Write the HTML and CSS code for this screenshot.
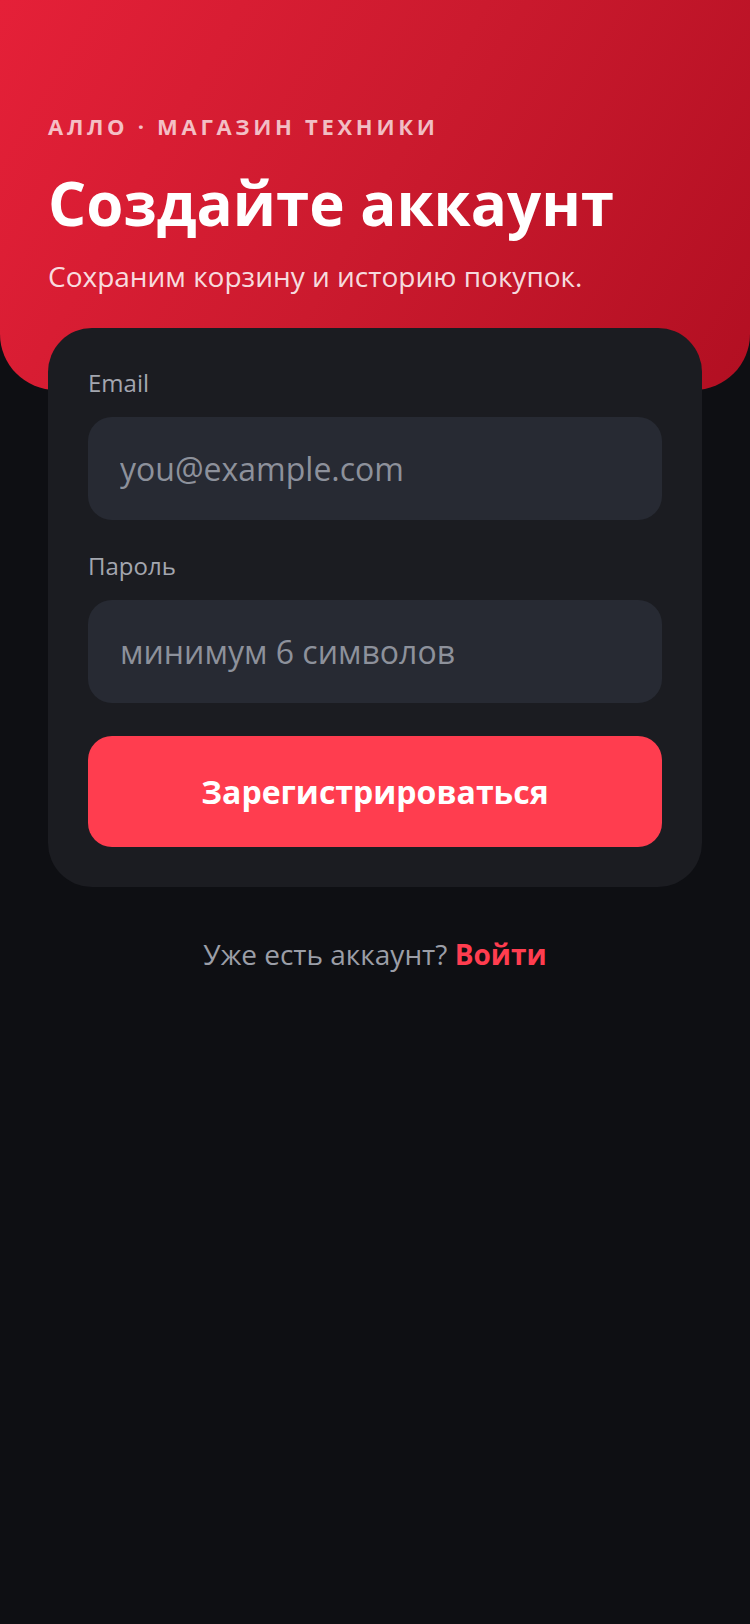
FILE: index.html
```html
<!DOCTYPE html>
<html lang="ru">
<head>
<meta charset="utf-8">
<meta name="viewport" content="width=750">
<title>Создайте аккаунт</title>
<link rel="stylesheet" href="styles.css">
</head>
<body>
<header class="hero">
  <p class="eyebrow">АЛЛО · МАГАЗИН ТЕХНИКИ</p>
  <h1 class="title">Создайте аккаунт</h1>
  <p class="subtitle">Сохраним корзину и историю покупок.</p>
</header>
<main>
  <form class="card">
    <div class="field">
      <label class="label" for="email">Email</label>
      <input class="input" id="email" type="email" placeholder="you@example.com">
    </div>
    <div class="field">
      <label class="label" for="pass">Пароль</label>
      <input class="input" id="pass" type="password" placeholder="минимум 6 символов">
    </div>
    <button class="submit" type="button">Зарегистрироваться</button>
  </form>
  <p class="footer">Уже есть аккаунт? <a class="login" href="#">Войти</a></p>
</main>
</body>
</html>
```
FILE: styles.css
```css
* { box-sizing: border-box; }
html, body {
  margin: 0;
  padding: 0;
  background: #0e0f13;
  font-family: "Open Sans", "Noto Sans", sans-serif;
}
.hero {
  height: 390px;
  padding: 111px 48px 0;
  background: linear-gradient(120deg, #e52038 0%, #cb1a2e 50%, #b20f22 100%);
  border-radius: 0 0 56px 56px;
}
.eyebrow {
  margin: 0;
  font-size: 22px;
  line-height: 30px;
  font-weight: 700;
  letter-spacing: 3.7px;
  color: rgba(255, 255, 255, 0.72);
}
.title {
  margin: 25px 0 0;
  font-size: 60px;
  line-height: 74px;
  font-weight: 700;
  color: #ffffff;
  letter-spacing: 0;
}
.subtitle {
  margin: 18px 0 0;
  font-size: 28px;
  line-height: 36px;
  font-weight: 400;
  color: rgba(255, 255, 255, 0.86);
}
.card {
  margin: -62px 48px 0;
  padding: 40px;
  background: #1b1c21;
  border-radius: 44px;
  display: flex;
  flex-direction: column;
  gap: 31px;
}
.field {
  display: flex;
  flex-direction: column;
  gap: 19px;
}
.label {
  font-size: 24px;
  line-height: 30px;
  color: #a3a6af;
}
.input {
  height: 103px;
  width: 100%;
  border: none;
  outline: none;
  border-radius: 24px;
  background: #272a33;
  padding: 0 32px;
  font-family: inherit;
  font-size: 32px;
  color: #e6e7ea;
}
.input::placeholder {
  color: #8d919b;
  opacity: 1;
}
.submit {
  margin-top: 2px;
  height: 111px;
  border: none;
  border-radius: 24px;
  background: #ff3d4f;
  color: #ffffff;
  font-family: inherit;
  font-size: 32px;
  font-weight: 700;
}
.footer {
  margin: 48px 0 0;
  text-align: center;
  font-size: 28px;
  line-height: 38px;
  color: #9b9ea7;
}
.login {
  color: #ff3d4f;
  font-weight: 700;
  text-decoration: none;
}
```
